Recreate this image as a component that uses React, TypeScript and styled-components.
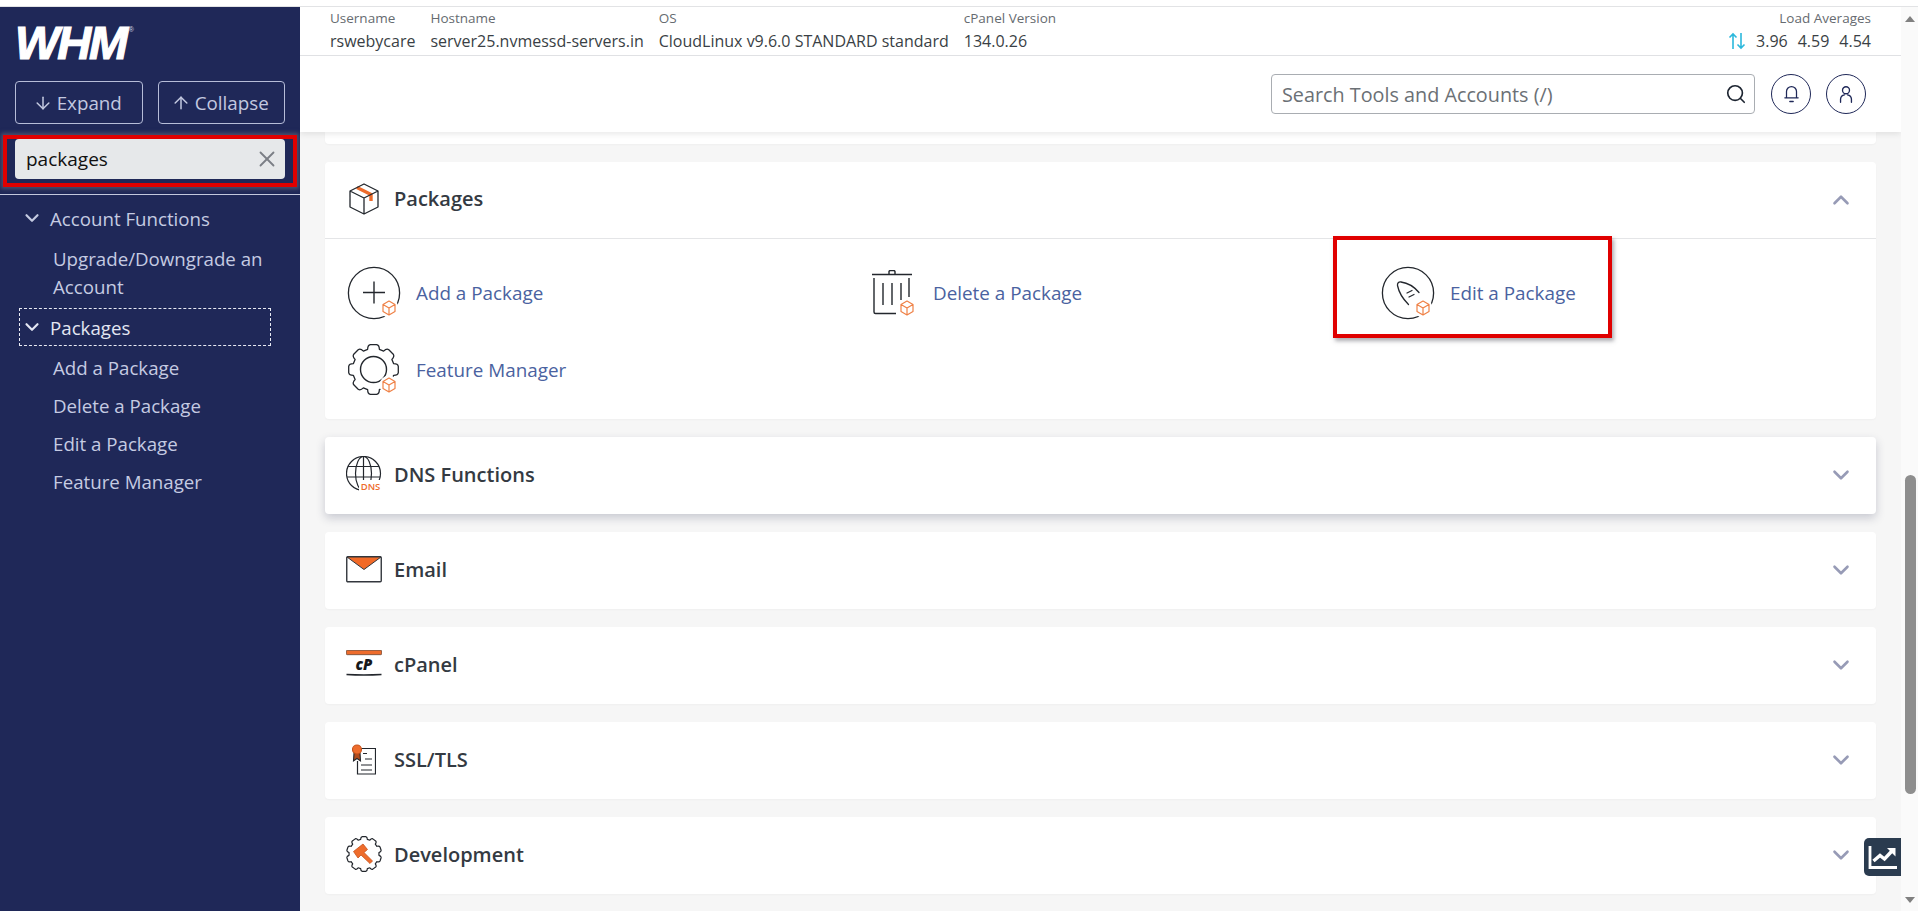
import React from "react";
import styled, { createGlobalStyle } from "styled-components";
import { ArrowDown, ArrowUp, Search, X, ChevronDown, ChevronUp } from "lucide-react";

const Global = createGlobalStyle`
  html, body { margin: 0; padding: 0; height: 100%; overflow: hidden; background: #fff; }
  * { box-sizing: border-box; }
  body { font-family: "Open Sans", "Liberation Sans", sans-serif; }
`;

const Page = styled.div`
  height: 911px;
  display: flex;
  flex-direction: column;
`;
const TopStrip = styled.div`
  height: 7px;
  flex: none;
  background: #fff;
  border-bottom: 1px solid #e2e3e5;
`;
const Body = styled.div`
  flex: 1;
  min-height: 0;
  display: flex;
  position: relative;
`;
const Sidebar = styled.aside`
  width: 300px;
  flex: none;
  background: #1f2858;
  display: flex;
  flex-direction: column;
`;
const Logo = styled.div`
  height: 74px;
  padding: 13px 0 0 15px;
  color: #fff;
  font-family: "Liberation Sans", sans-serif;
  font-weight: 700;
  font-style: italic;
  font-size: 47px;
  line-height: 46px;
  letter-spacing: -2.2px;
  -webkit-text-stroke: 1.2px #fff;
  display: flex;
  align-items: flex-start;
  sup {
    font-size: 7px;
    line-height: 7px;
    letter-spacing: 0;
    font-style: normal;
    font-weight: 400;
    margin: 6px 0 0 3px;
    color: #d0d4e4;
    -webkit-text-stroke: 0;
  }
`;
const ExpandRow = styled.div`
  display: flex;
  gap: 15px;
  padding: 0 15px;
`;
const OutlineButton = styled.button`
  flex: 1;
  height: 43px;
  background: transparent;
  border: 1px solid #b6bdd8;
  border-radius: 4px;
  color: #c3c9e0;
  font: 400 18.8px "Open Sans", sans-serif;
  display: flex;
  align-items: center;
  justify-content: center;
  gap: 4px;
  padding: 0 3px 0 0;
`;
const SearchFrame = styled.div`
  margin: 11px 3px 0;
  border: 4px solid #e00000;
  padding: 0 8px 4px;
  box-shadow: 0 0 4px 2px rgba(120, 120, 130, 0.5);
`;
const SideInput = styled.div`
  height: 40px;
  background: #e6e8ea;
  border-radius: 4px;
  padding: 0 5px 0 11px;
  display: flex;
  align-items: center;
  justify-content: space-between;
  color: #111;
  font-size: 19px;
  svg { color: #7b7f86; }
`;
const SideDivider = styled.div`
  height: 1px;
  margin-top: 7px;
  background: #c3c8dc;
`;
const Tree = styled.nav`
  padding: 4px 0 0;
  color: #c5cbe2;
  font-size: 18.7px;
`;
const TreeHead = styled.div<{ $focus?: boolean }>`
  height: 38px;
  margin: 0 29px 0 19px;
  padding-left: 1px;
  display: flex;
  align-items: center;
  gap: 7px;
  border: 1px dashed ${(p) => (p.$focus ? "#e8eaf3" : "transparent")};
  color: ${(p) => (p.$focus ? "#e3e6f2" : "#c5cbe2")};
  svg { flex: none; }
`;
const TreeItem = styled.div<{ $tall?: boolean }>`
  padding-left: 53px;
  padding-right: 29px;
  line-height: 28px;
  margin-bottom: ${(p) => (p.$tall ? "7px" : "10px")};
`;
const TreeSub = styled.div`
  padding-top: 8px;
`;

const Main = styled.main`
  flex: 1;
  min-width: 0;
  background: #f6f6f6;
  display: flex;
  flex-direction: column;
  overflow: hidden;
`;
const Header = styled.header`
  flex: none;
  background: #fff;
  box-shadow: 0 2px 6px rgba(0, 0, 0, 0.09);
  position: relative;
`;
const InfoBar = styled.div`
  height: 49px;
  border-bottom: 1px solid #e0e1e4;
  padding: 0 30px;
  display: flex;
  gap: 15px;
`;
const InfoCell = styled.div<{ $right?: boolean }>`
  display: flex;
  flex-direction: column;
  margin-left: ${(p) => (p.$right ? "auto" : "0")};
  align-items: ${(p) => (p.$right ? "flex-end" : "flex-start")};
`;
const InfoLabel = styled.div`
  font-size: 13.5px;
  line-height: 18px;
  margin-top: 2px;
  color: #666b70;
`;
const InfoValue = styled.div`
  font-size: 16px;
  line-height: 22px;
  margin-top: 3px;
  color: #3a3f45;
  display: flex;
  align-items: center;
  gap: 10px;
  white-space: nowrap;
`;
const SearchBar = styled.div`
  height: 76px;
  padding: 0 35px 0 0;
  display: flex;
  justify-content: flex-end;
  align-items: center;
  gap: 15px;
`;
const ToolSearch = styled.div`
  width: 484px;
  height: 40px;
  border: 1px solid #a9adb2;
  border-radius: 4px;
  padding: 0 7px 0 10px;
  display: flex;
  align-items: center;
  justify-content: space-between;
  font-size: 19.8px;
  color: #6b7075;
  margin-right: 1px;
  svg { color: #1c2430; }
`;
const RoundButton = styled.div`
  width: 40px;
  height: 40px;
  border-radius: 50%;
  border: 1px solid #1f2858;
  color: #1f2858;
  display: flex;
  align-items: center;
  justify-content: center;
`;
const Content = styled.div`
  flex: 1;
  padding: 0 25px;
  display: flex;
  flex-direction: column;
  gap: 18px;
`;
const ClippedCard = styled.div`
  height: 12px;
  flex: none;
  background: #fff;
  border-radius: 0 0 4px 4px;
  box-shadow: 0 1px 2px rgba(0, 0, 0, 0.03);
`;
const Card = styled.section<{ $raised?: boolean }>`
  flex: none;
  background: #fff;
  border-radius: 4px;
  box-shadow: ${(p) =>
    p.$raised ? "0 4px 10px rgba(40, 46, 80, 0.22)" : "0 1px 2px rgba(0, 0, 0, 0.03)"};
`;
const CardHead = styled.div<{ $open?: boolean }>`
  height: 77px;
  border-bottom: ${(p) => (p.$open ? "1px solid #e4e5e7" : "none")};
  padding: 0 22px 3px 20px;
  display: flex;
  align-items: center;
  font-size: 20px;
  font-weight: 600;
  color: #343a42;
  > svg:last-child { margin: 2px 0 0 auto; color: #979bb6; }
`;
const HeadIcon = styled.span`
  width: 38px;
  height: 40px;
  flex: none;
  margin-right: 11px;
  display: flex;
  align-items: center;
  justify-content: center;
`;
const ItemGrid = styled.div`
  display: grid;
  grid-template-columns: repeat(3, 1fr);
  grid-auto-rows: 77px;
  padding: 15px 0 11px;
`;
const Item = styled.div`
  position: relative;
  display: flex;
  align-items: center;
  padding-left: 19px;
  gap: 12px;
  font-size: 18.85px;
  color: #4a62a0;
`;
const ItemIcon = styled.span`
  width: 60px;
  height: 60px;
  flex: none;
  display: flex;
  align-items: center;
  justify-content: center;
`;
const Highlight = styled.div`
  position: absolute;
  left: -26px;
  top: -18px;
  width: 279px;
  height: 102px;
  border: 4px solid #e00000;
  box-shadow: 2px 3px 4px rgba(90, 90, 100, 0.5);
  pointer-events: none;
`;
const Scrollbar = styled.div`
  width: 17px;
  flex: none;
  background: #fafafa;
  display: flex;
  flex-direction: column;
  align-items: center;
  padding: 0 0 0 1px;
`;
const ScrollArrow = styled.div<{ $down?: boolean }>`
  width: 0;
  height: 0;
  flex: none;
  border-left: 5px solid transparent;
  border-right: 5px solid transparent;
  ${(p) => (p.$down ? "border-top: 6px solid #808080;" : "border-bottom: 6px solid #808080;")}
  margin-top: ${(p) => (p.$down ? "103px" : "9px")};
`;
const ScrollThumb = styled.div`
  width: 11px;
  height: 319px;
  flex: none;
  margin-top: 453px;
  border-radius: 6px;
  background: #8e8e8e;
`;
const ChartButton = styled.div`
  position: absolute;
  right: 17px;
  top: 831px;
  width: 37px;
  height: 38px;
  background: #2a3b4f;
  border-radius: 5px 0 0 5px;
  display: flex;
  align-items: center;
  justify-content: center;
`;

const Cube = ({ cx = 41, cy = 41 }: { cx?: number; cy?: number }) => (
  <g fill="none" stroke="#ef8146" strokeWidth="1.2" strokeLinejoin="round">
    <circle cx={cx} cy={cy} r="9.5" fill="#fff" stroke="none" />
    <path
      d={`M${cx} ${cy - 7}l6 3.5v7l-6 3.5-6-3.5v-7z M${cx - 6} ${cy - 3.5}l6 3.5 6-3.5 M${cx} ${cy}v7`}
    />
  </g>
);

const AddIcon = () => (
  <svg width="54" height="54" viewBox="0 0 54 54" fill="none" stroke="#23272d">
    <circle cx="27" cy="27" r="25.6" strokeWidth="1.3" />
    <path d="M16 26.5h22M27 15.5v22" strokeWidth="1.4" />
    <Cube cx={42} cy={42} />
  </svg>
);

const gearPath = (cx: number, cy: number, outer: number, inner: number, teeth: number) => {
  const pts: string[] = [];
  const step = (Math.PI * 2) / teeth;
  for (let i = 0; i < teeth; i++) {
    const a = i * step - Math.PI / 2;
    const p = (r: number, da: number) =>
      `${(cx + r * Math.cos(a + da)).toFixed(2)} ${(cy + r * Math.sin(a + da)).toFixed(2)}`;
    pts.push(
      `${i === 0 ? "M" : "L"}${p(inner, -step * 0.36)}`,
      `Q${p(outer, -step * 0.3)} ${p(outer, -step * 0.16)}`,
      `L${p(outer, step * 0.16)}`,
      `Q${p(outer, step * 0.3)} ${p(inner, step * 0.36)}`
    );
  }
  return pts.join(" ") + "Z";
};

const GearIcon = () => (
  <svg width="52" height="52" viewBox="0 0 52 52" fill="none" stroke="#23272d">
    <path d={gearPath(25.5, 25.5, 25, 21, 8)} strokeWidth="1.3" strokeLinejoin="round" />
    <circle cx="25.5" cy="25.5" r="13" strokeWidth="1.4" />
    <Cube cx={41} cy={41} />
  </svg>
);

const TrashIcon = () => (
  <svg width="48" height="46" viewBox="-4 0 48 46" fill="none" stroke="#23272d" strokeWidth="1.4">
    <path d="M1 4.500h40" />
    <path d="M18 4v-2.500a1.500 1.500 0 0 1 1.500-1h3a1.500 1.500 0 0 1 1.500 1V4" />
    <path d="M3 8v34a1.500 1.500 0 0 0 1.500 1.500H25" />
    <path d="M12 13v22M21 13v22M30 13v17M38 8v19" />
    <Cube cx={36} cy={38} />
  </svg>
);

const RocketIcon = () => (
  <svg width="54" height="54" viewBox="0 0 54 54" fill="none" stroke="#23272d">
    <circle cx="27" cy="27" r="25.6" strokeWidth="1.3" />
    <path
      d="M16.500 19.500c-.3-2.500 1-3.800 3.500-3.500 6 .8 13 4.500 18 10.500M16.500 19.500c1 5 4.500 12.500 11 19"
      strokeWidth="1.3"
      strokeLinecap="round"
    />
    <path d="M26 27l5-2.500M28 31l5-2.500" strokeWidth="1.2" strokeLinecap="round" />
    <Cube cx={42} cy={42} />
  </svg>
);

const BoxIcon = () => (
  <svg width="30" height="32" viewBox="0 0 30 32" fill="none" stroke="#23272d" strokeWidth="1.3" strokeLinejoin="round">
    <path d="M8 4.500L22 11.500V18" stroke="#ee6c2c" strokeWidth="3.400" />
    <path d="M15 1l14 7v16l-14 7-14-7V8zM1 8l14 7 14-7M15 15v16" />
  </svg>
);

const GlobeIcon = () => (
  <svg width="36" height="36" viewBox="0 0 36 36" fill="none" stroke="#23272d" strokeWidth="1.2">
    <circle cx="17.500" cy="17.500" r="17" />
    <ellipse cx="17.500" cy="17.500" rx="8" ry="17" />
    <path d="M17.500 .5v34M2 10.500h31M1 21h33" />
    <rect x="13" y="24" width="23" height="12" fill="#fff" stroke="none" />
    <text
      x="24.500"
      y="34"
      textAnchor="middle"
      fill="#ee6c2c"
      stroke="none"
      fontSize="9.500"
      fontFamily="Open Sans, sans-serif"
    >
      DNS
    </text>
  </svg>
);

const MailIcon = () => (
  <svg width="36" height="27" viewBox="0 0 36 27">
    <rect x=".75" y=".75" width="34.500" height="25" rx="1" fill="#fff" stroke="#33373d" strokeWidth="1.400" />
    <path d="M1 1h34L18 13.500z" fill="#f26a27" stroke="#33373d" strokeWidth="1" strokeLinejoin="round" />
  </svg>
);

const CPanelIcon = () => (
  <svg width="36" height="28" viewBox="0 0 36 28">
    <rect x=".3" y=".3" width="35.400" height="4.400" rx="1" fill="#ee6c2c" stroke="#3a2a20" strokeWidth=".6" />
    <text
      x="18"
      y="19.500"
      textAnchor="middle"
      fill="#16181b"
      fontSize="15"
      fontWeight="800"
      fontStyle="italic"
      fontFamily="Open Sans, sans-serif"
    >
      cP
    </text>
    <path d="M.5 24.500q17.500 1 35 0" fill="none" stroke="#23272d" strokeWidth="1.400" />
  </svg>
);

const SslIcon = () => (
  <svg width="24" height="31" viewBox="0 0 24 31" fill="none" stroke="#23272d" strokeWidth="1.1">
    <path d="M9 4.500h14.500V30H5.500V17" strokeWidth="1.200" />
    <path d="M11 9.500h4M13 15h7M9 21h11M9 26h11" />
    <path d="M2 9l-.5 8 3.500-2.500 3.500 2.500-.5-8z" fill="#b24c1c" />
    <circle cx="5" cy="5.500" r="4.500" fill="#ee6c2c" stroke="#c7521b" />
  </svg>
);

const DevIcon = () => (
  <svg width="36" height="36" viewBox="0 0 36 36" fill="none">
    <path d={gearPath(18, 18, 17.5, 15, 10)} stroke="#23272d" strokeWidth="1.200" strokeLinejoin="round" />
    <path d="M7.500 15.500L17 8l4.500 5.500-3.500 3L26.500 25 24 27.500 15 19l-3 3z" fill="#ee6c2c" stroke="#c7521b" strokeWidth=".8" strokeLinejoin="round" />
  </svg>
);

const BellIcon = () => (
  <svg width="17" height="20" viewBox="0 0 20 24" fill="none" stroke="currentColor" strokeWidth="1.500" strokeLinecap="round">
    <path d="M4 16V9a6 6 0 0 1 12 0v7M2 16.500h16" />
    <path d="M8 21h4" strokeWidth="1.700" />
  </svg>
);

const UserIcon = () => (
  <svg width="14" height="19" viewBox="0 0 18 24" fill="none" stroke="currentColor" strokeWidth="1.700" strokeLinecap="round">
    <circle cx="9" cy="6.500" r="4.500" />
    <path d="M2 22v-4a6 6 0 0 1 5-5.500M16 22v-4a6 6 0 0 0-5-5.500" />
  </svg>
);

const LoadArrows = () => (
  <svg width="18" height="18" viewBox="0 0 18 18" fill="none" stroke="#2bb8dc" strokeWidth="1.600">
    <path d="M5 17V2M1.500 5.500L5 2l3.500 3.500M13 1v15M9.500 12.500L13 16l3.500-3.500" />
  </svg>
);

const ChartIcon = () => (
  <svg width="30" height="28" viewBox="0 0 30 28" fill="none" stroke="#fff">
    <path d="M2 3v21.500H29" strokeWidth="2.800" />
    <path d="M5.500 18l6.500-5.500 4.500 3.500 7-7.500" strokeWidth="3.400" />
    <path d="M19 5h8.500v8.500z" fill="#fff" stroke="none" />
  </svg>
);

const Chev = () => <ChevronDown size={26} strokeWidth={2.4} />;

const collapsed: [string, React.ReactNode, boolean?][] = [
  ["DNS Functions", <GlobeIcon />, true],
  ["Email", <MailIcon />],
  ["cPanel", <CPanelIcon />],
  ["SSL/TLS", <SslIcon />],
  ["Development", <DevIcon />],
];

export default function App() {
  return (
    <Page>
      <Global />
      <TopStrip />
      <Body>
        <Sidebar>
          <Logo>
            WHM<sup>®</sup>
          </Logo>
          <ExpandRow>
            <OutlineButton>
              <ArrowDown size={20} strokeWidth={1.8} />
              Expand
            </OutlineButton>
            <OutlineButton>
              <ArrowUp size={20} strokeWidth={1.8} />
              Collapse
            </OutlineButton>
          </ExpandRow>
          <SearchFrame>
            <SideInput>
              packages
              <X size={26} strokeWidth={1.7} />
            </SideInput>
          </SearchFrame>
          <SideDivider />
          <Tree>
            <TreeHead>
              <ChevronDown size={22} strokeWidth={2.4} />
              Account Functions
            </TreeHead>
            <TreeSub>
              <TreeItem $tall>Upgrade/Downgrade an Account</TreeItem>
            </TreeSub>
            <TreeHead $focus>
              <ChevronDown size={22} strokeWidth={2.4} />
              Packages
            </TreeHead>
            <TreeSub>
              <TreeItem>Add a Package</TreeItem>
              <TreeItem>Delete a Package</TreeItem>
              <TreeItem>Edit a Package</TreeItem>
              <TreeItem>Feature Manager</TreeItem>
            </TreeSub>
          </Tree>
        </Sidebar>
        <Main>
          <Header>
            <InfoBar>
              <InfoCell>
                <InfoLabel>Username</InfoLabel>
                <InfoValue>rswebycare</InfoValue>
              </InfoCell>
              <InfoCell>
                <InfoLabel>Hostname</InfoLabel>
                <InfoValue>server25.nvmessd-servers.in</InfoValue>
              </InfoCell>
              <InfoCell>
                <InfoLabel>OS</InfoLabel>
                <InfoValue>CloudLinux v9.6.0 STANDARD standard</InfoValue>
              </InfoCell>
              <InfoCell>
                <InfoLabel>cPanel Version</InfoLabel>
                <InfoValue>134.0.26</InfoValue>
              </InfoCell>
              <InfoCell $right>
                <InfoLabel>Load Averages</InfoLabel>
                <InfoValue>
                  <LoadArrows />
                  <span>3.96</span>
                  <span>4.59</span>
                  <span>4.54</span>
                </InfoValue>
              </InfoCell>
            </InfoBar>
            <SearchBar>
              <ToolSearch>
                Search Tools and Accounts (/)
                <Search size={22} strokeWidth={1.8} />
              </ToolSearch>
              <RoundButton>
                <BellIcon />
              </RoundButton>
              <RoundButton>
                <UserIcon />
              </RoundButton>
            </SearchBar>
          </Header>
          <Content>
            <ClippedCard />
            <Card>
              <CardHead $open>
                <HeadIcon>
                  <BoxIcon />
                </HeadIcon>
                Packages
                <ChevronUp size={26} strokeWidth={2.4} />
              </CardHead>
              <ItemGrid>
                <Item>
                  <ItemIcon>
                    <AddIcon />
                  </ItemIcon>
                  Add a Package
                </Item>
                <Item>
                  <ItemIcon>
                    <TrashIcon />
                  </ItemIcon>
                  Delete a Package
                </Item>
                <Item>
                  <ItemIcon>
                    <RocketIcon />
                  </ItemIcon>
                  Edit a Package
                  <Highlight />
                </Item>
                <Item>
                  <ItemIcon>
                    <GearIcon />
                  </ItemIcon>
                  Feature Manager
                </Item>
              </ItemGrid>
            </Card>
            {collapsed.map(([name, icon, raised]) => (
              <Card key={name} $raised={raised}>
                <CardHead>
                  <HeadIcon>{icon}</HeadIcon>
                  {name}
                  <Chev />
                </CardHead>
              </Card>
            ))}
          </Content>
        </Main>
        <Scrollbar>
          <ScrollArrow />
          <ScrollThumb />
          <ScrollArrow $down />
        </Scrollbar>
        <ChartButton>
          <ChartIcon />
        </ChartButton>
      </Body>
    </Page>
  );
}
